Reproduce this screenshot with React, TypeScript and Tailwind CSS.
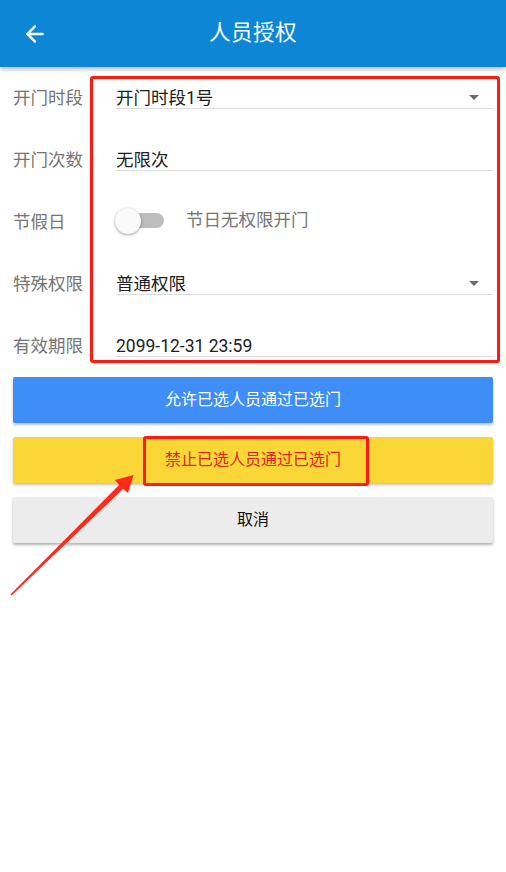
import { ArrowLeft } from "lucide-react";

const font = { fontFamily: 'Roboto, "Noto Sans CJK SC", sans-serif' };

function Caret() {
  return (
    <svg width="10" height="5" viewBox="0 0 10 5" className="mr-[14px]">
      <path d="M0 0 L10 0 L5 5 Z" fill="#6b6b6b" />
    </svg>
  );
}

function Row({ label, children, line = true }: { label: string; children: React.ReactNode; line?: boolean }) {
  return (
    <div className="flex h-[62px] px-[13px]">
      <div className="w-[103px] pt-[19px] text-[17.5px] leading-[24px] text-[#757575]">{label}</div>
      <div
        className={
          "flex-1 h-[42px] pt-[19px] flex items-start justify-between " +
          (line ? "border-b border-[#dcdcdc]" : "")
        }
      >
        {children}
      </div>
    </div>
  );
}

export default function App() {
  return (
    <div className="relative w-[506px] h-[872px] bg-white overflow-hidden" style={font}>
      {/* Header */}
      <div className="relative z-10 h-[67px] bg-[#0e86d6] flex items-center shadow-[0_2px_5px_rgba(0,0,0,0.3)]">
        <ArrowLeft className="absolute left-[22px] text-white" size={26} strokeWidth={2.2} />
        <h1 className="flex-1 text-center text-white text-[21.5px] tracking-wide">人员授权</h1>
      </div>

      {/* Form */}
      <div>
        <Row label="开门时段">
          <span className="text-[17.5px] leading-[24px] text-[#212121]">开门时段1号</span>
          <div className="pt-[9px]"><Caret /></div>
        </Row>
        <Row label="开门次数">
          <span className="text-[17.5px] leading-[24px] text-[#212121]">无限次</span>
        </Row>
        <Row label="节假日" line={false}>
          <div className="flex items-center h-[24px] -mt-[2px]">
            <div className="relative w-[48px] h-[24px] flex items-center">
              <div className="ml-[2px] w-[46px] h-[15px] rounded-full bg-[#bdbdbd]" />
              <div className="absolute -left-[1px] top-[0px] w-[26px] h-[26px] rounded-full bg-[#fafafa] shadow-[0_1px_3px_rgba(0,0,0,0.4)]" />
            </div>
            <span className="ml-[22px] text-[17.5px] leading-[24px] text-[#757575]">节日无权限开门</span>
          </div>
        </Row>
        <Row label="特殊权限">
          <span className="text-[17.5px] leading-[24px] text-[#212121]">普通权限</span>
          <div className="pt-[9px]"><Caret /></div>
        </Row>
        <Row label="有效期限">
          <span className="text-[17.5px] leading-[24px] text-[#212121]">2099-12-31 23:59</span>
        </Row>
      </div>

      {/* Buttons */}
      <div className="flex flex-col gap-[14px] px-[13px]">
        <button className="h-[46px] rounded-[2px] bg-[#3f8ef7] text-white text-[16px] shadow-[0_2px_3px_rgba(0,0,0,0.25)]">
          允许已选人员通过已选门
        </button>
        <button className="h-[46px] rounded-[2px] bg-[#fbd637] text-[#d8271c] text-[16px] shadow-[0_2px_3px_rgba(0,0,0,0.25)]">
          禁止已选人员通过已选门
        </button>
        <button className="h-[46px] rounded-[2px] bg-[#ececec] text-[#111] text-[16px] shadow-[0_2px_3px_rgba(0,0,0,0.3)]">
          取消
        </button>
      </div>

      {/* Annotations */}
      <div className="absolute left-[90px] top-[76px] w-[410px] h-[287px] border-[3px] border-[#ff1a12] rounded-[3px] pointer-events-none" />
      <div className="absolute left-[143px] top-[436px] w-[226px] h-[50px] border-[3px] border-[#ff1a12] rounded-[3px] pointer-events-none" />
      <svg className="absolute left-0 top-0 pointer-events-none" width="506" height="872">
        <path d="M10.4 594.6 L119 485 L115 480 L133.5 475 L128 493 L123 489 L11.6 595.6 Z" fill="#ff2a1a" />
      </svg>
    </div>
  );
}
